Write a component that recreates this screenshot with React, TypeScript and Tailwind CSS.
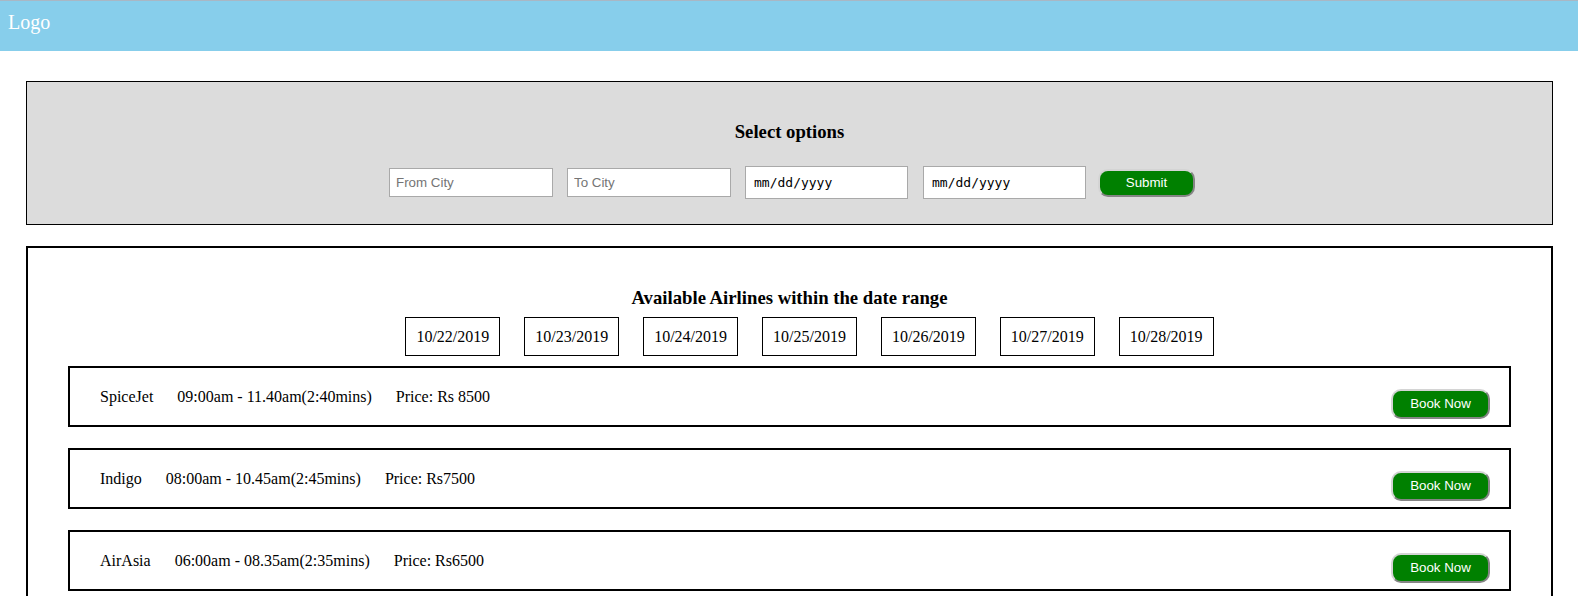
import React from "react";

const dates = [
  "10/22/2019",
  "10/23/2019",
  "10/24/2019",
  "10/25/2019",
  "10/26/2019",
  "10/27/2019",
  "10/28/2019",
];

const flights = [
  { name: "SpiceJet", time: "09:00am - 11.40am(2:40mins)", price: "Price: Rs 8500" },
  { name: "Indigo", time: "08:00am - 10.45am(2:45mins)", price: "Price: Rs7500" },
  { name: "AirAsia", time: "06:00am - 08.35am(2:35mins)", price: "Price: Rs6500" },
];

const GAP = "      ";

function GreenButton({ label, size }: { label: string; size: string }) {
  return (
    <button
      type="button"
      className={`${size} shrink-0 rounded-[10px] border-2 border-solid border-t-[#d4d4d4] border-l-[#d4d4d4] border-r-[#858585] border-b-[#858585] bg-[#008000] text-center font-['Liberation_Sans',Arial,sans-serif] text-[13.33px] leading-none text-white`}
    >
      {label}
    </button>
  );
}

export default function App() {
  return (
    <div className="h-[596px] overflow-hidden bg-white font-['Liberation_Serif','Times_New_Roman',serif] text-[16px] text-black">
      <header className="h-[51px] border-t border-[#a9b7c4] bg-[#87ceeb] pl-[8px] pt-[10px]">
        <span className="block text-[20px] leading-[23px] text-white">Logo</span>
      </header>

      <main className="pl-[26px] pr-[25px]">
        <section className="mt-[30px] h-[144px] border border-black bg-[#dcdcdc] pt-[39px]">
          <h3 className="text-center text-[18.72px] font-bold leading-[22px]">Select options</h3>
          <div className="mt-[23px] flex h-[33px] items-center justify-center pl-[5px]">
            <input
              type="text"
              placeholder="From City"
              className="h-[29px] w-[164px] border border-[#a9a9a9] bg-white px-[6px] font-['Liberation_Sans',Arial,sans-serif] text-[13.33px] text-black outline-none placeholder:text-[#757575]"
            />
            <input
              type="text"
              placeholder="To City"
              className="ml-[14px] h-[29px] w-[164px] border border-[#a9a9a9] bg-white px-[6px] font-['Liberation_Sans',Arial,sans-serif] text-[13.33px] text-black outline-none placeholder:text-[#757575]"
            />
            <input
              type="text"
              readOnly
              placeholder="mm/dd/yyyy"
              className="ml-[14px] h-[33px] w-[163px] border border-[#a9a9a9] bg-white pl-[8px] font-['DejaVu_Sans_Mono',monospace] text-[13px] text-black outline-none placeholder:text-black"
            />
            <input
              type="text"
              readOnly
              placeholder="mm/dd/yyyy"
              className="ml-[15px] h-[33px] w-[163px] border border-[#a9a9a9] bg-white pl-[8px] font-['DejaVu_Sans_Mono',monospace] text-[13px] text-black outline-none placeholder:text-black"
            />
            <div className="ml-[12px]">
              <GreenButton label="Submit" size="w-[97px] h-[28px] block" />
            </div>
          </div>
        </section>

        <section className="mt-[21px] border-2 border-black pb-[20px] pt-[39px]">
          <h3 className="text-center text-[18.72px] font-bold leading-[22px]">
            Available Airlines within the date range
          </h3>
          <div className="mt-[8px] flex justify-center gap-[24px] pl-[40px]">
            {dates.map((d) => (
              <div
                key={d}
                className="flex h-[39px] items-center border border-black px-[10px] leading-[18px]"
              >
                {d}
              </div>
            ))}
          </div>
          <div className="mx-[40px] mt-[10px] flex flex-col gap-[21px]">
            {flights.map((f) => (
              <div
                key={f.name}
                className="flex h-[61px] items-start justify-between border-2 border-black pl-[30px] pr-[19px] pt-[20px]"
              >
                <span className="whitespace-pre leading-[18px]">
                  {f.name}
                  {GAP}
                  {f.time}
                  {GAP}
                  {f.price}
                </span>
                <div className="mt-[1px]">
                  <GreenButton label="Book Now" size="w-[99px] h-[30px] block" />
                </div>
              </div>
            ))}
          </div>
        </section>
      </main>
    </div>
  );
}
